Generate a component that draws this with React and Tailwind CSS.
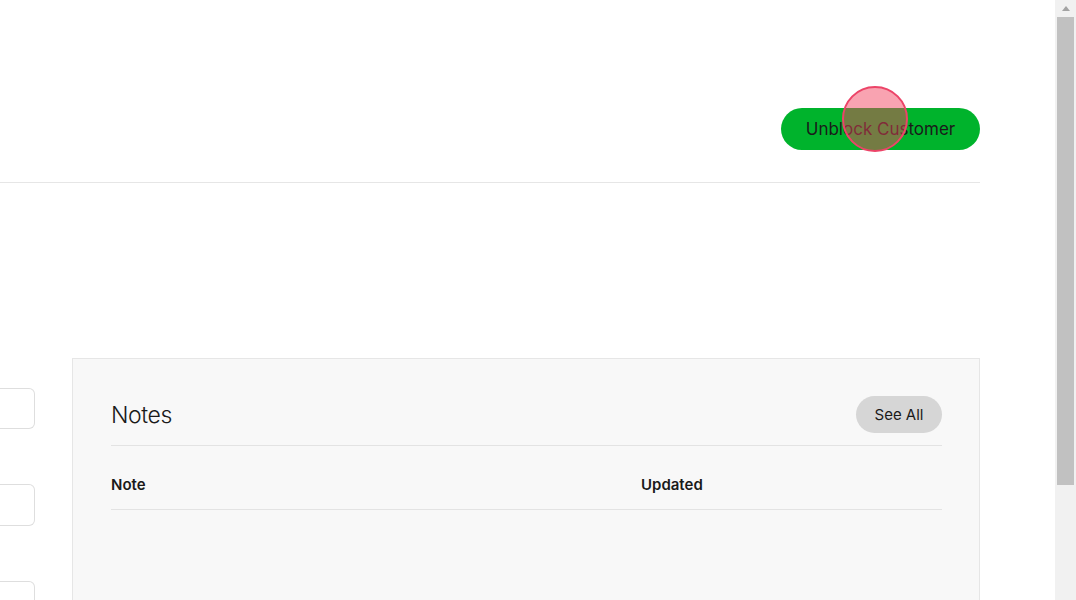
export default function App() {
  const font = { fontFamily: 'Inter, "Liberation Sans", Arial, sans-serif' };
  return (
    <div className="flex h-[600px] w-[1076px] overflow-hidden bg-white text-[#1a1a1a]" style={font}>
      <div className="relative w-[1055px] shrink-0">
        <div className="flex h-[183px] w-[980px] items-start justify-end border-b border-[#e6e6e6] pt-[108px]">
          <button className="flex h-[42px] w-[199px] items-center justify-center rounded-full bg-[#00b32c] pt-[2px] text-[17px] tracking-[0px] text-[#1a1a1a]">
            Unblock Customer
          </button>
        </div>
        <div className="mt-[175px] flex gap-[37px]">
          <div className="flex w-[35px] flex-col gap-[55px] pt-[30px]">
            <div className="h-[41px] rounded-r-md border border-l-0 border-[#dedede] bg-white" />
            <div className="h-[42px] rounded-r-md border border-l-0 border-[#dedede] bg-white" />
            <div className="h-[42px] rounded-r-md border border-l-0 border-[#dedede] bg-white" />
          </div>
          <div className="h-[300px] w-[908px] border border-[#e6e6e6] bg-[#f8f8f8] pl-[38px] pr-[37px] pt-[37px]">
            <div className="flex h-[50px] items-start justify-between border-b border-[#e3e3e3]">
              <h2 className="pt-[7px] text-[23px] font-light leading-[24px] tracking-[-0.4px] text-[#1a1a1a]">Notes</h2>
              <button className="flex h-[37px] w-[86px] items-center justify-center rounded-full bg-[#d6d6d6] pt-[1px] text-[15px] text-[#1a1a1a]">
                See All
              </button>
            </div>
            <div className="flex border-b border-[#e3e3e3] pb-[14px] pt-[29px] text-[15px] font-semibold leading-[20px]">
              <div className="w-[530px]">Note</div>
              <div>Updated</div>
            </div>
          </div>
        </div>
        <div className="pointer-events-none absolute left-[842px] top-[86px] h-[66px] w-[66px] rounded-full border-2 border-[#ec4468] bg-[rgba(242,62,92,0.48)]" />
      </div>
      <div className="flex w-[21px] shrink-0 flex-col bg-[#f1f1f1]">
        <div className="flex h-[17px] items-center justify-center">
          <svg width="8" height="5" viewBox="0 0 8 5"><path d="M4 0L8 5H0z" fill="#a3a3a3" /></svg>
        </div>
        <div className="mx-[2px] h-[468px] bg-[#c1c1c1]" />
      </div>
    </div>
  );
}
